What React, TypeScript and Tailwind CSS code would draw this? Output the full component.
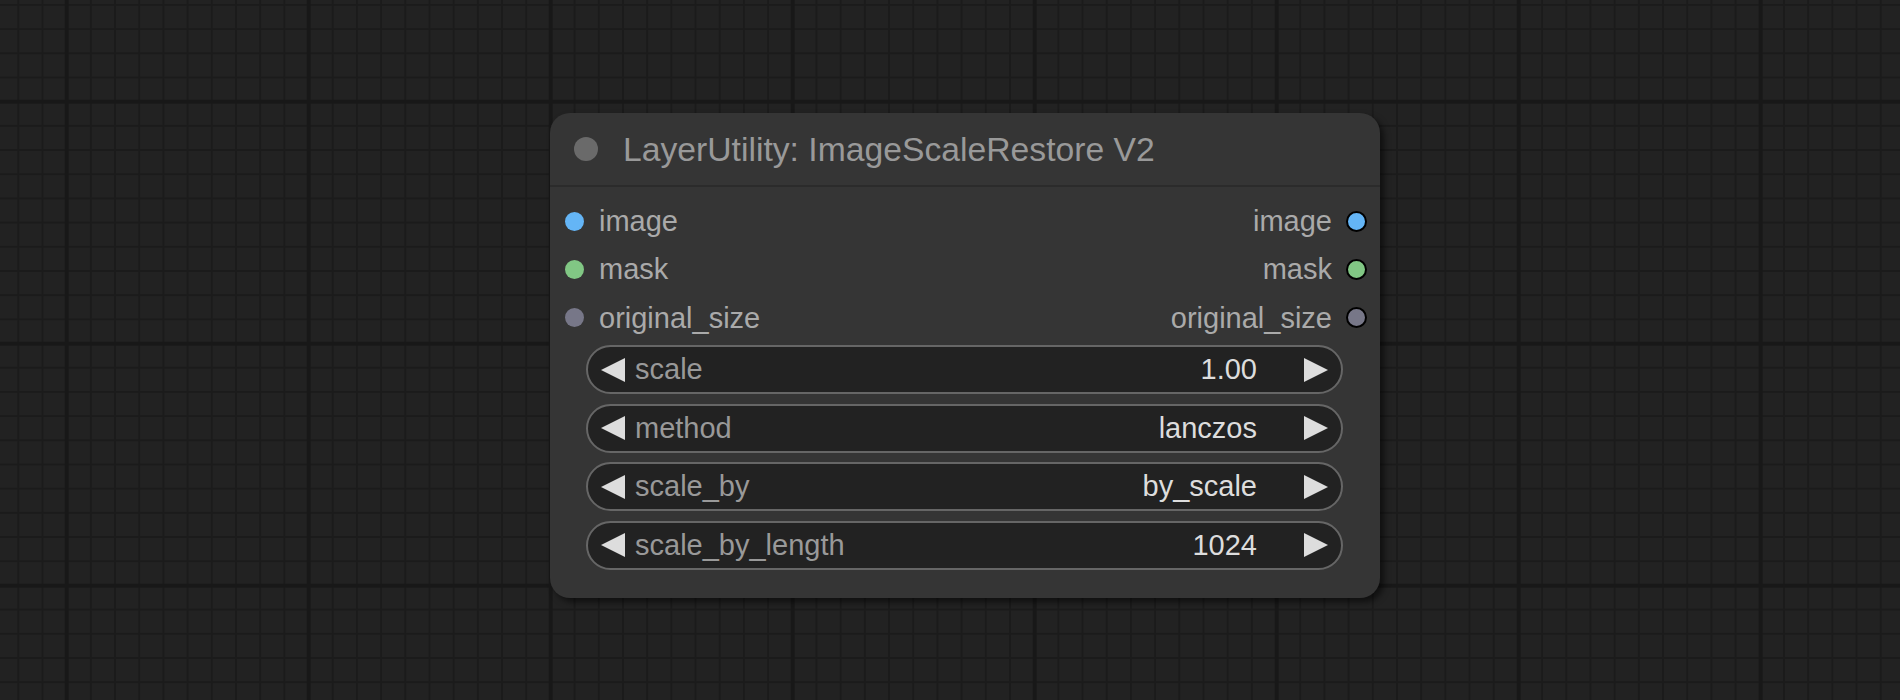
const inputs = [
  { name: "image", color: "bg-[#64b5f6]" },
  { name: "mask", color: "bg-[#81c784]" },
  { name: "original_size", color: "bg-[#777788]" },
];

const widgets = [
  { label: "scale", value: "1.00" },
  { label: "method", value: "lanczos" },
  { label: "scale_by", value: "by_scale" },
  { label: "scale_by_length", value: "1024" },
];

function Arrow({ dir }: { dir: "left" | "right" }) {
  return (
    <svg width="24" height="24" viewBox="0 0 24 24" className="shrink-0">
      <polygon
        points={dir === "left" ? "24,0 0,12 24,24" : "0,0 24,12 0,24"}
        fill="#dddddd"
      />
    </svg>
  );
}

function Widget({ label, value }: { label: string; value: string }) {
  return (
    <div className="flex h-[49px] items-center rounded-full border-2 border-[#666666] bg-[#222222] pl-[13px] pr-[13px] text-[29px] leading-[45px]">
      <Arrow dir="left" />
      <span className="ml-[10px] text-[#999999]">{label}</span>
      <span className="ml-auto mr-[47px] text-[#dddddd]">{value}</span>
      <Arrow dir="right" />
    </div>
  );
}

export default function App() {
  return (
    <div className="relative h-[700px] w-[1900px] overflow-hidden bg-[#222222] bg-[image:linear-gradient(to_right,#181818_0_4px,transparent_4px),linear-gradient(to_bottom,#181818_0_4px,transparent_4px),linear-gradient(to_right,#1b1b1b_0_2px,transparent_2px),linear-gradient(to_bottom,#1b1b1b_0_2px,transparent_2px)] bg-[size:242px_242px,242px_242px,24.2px_24.2px,24.2px_24.2px] bg-[position:64.7px_99.7px,64.7px_99.7px,65.7px_100.7px,65.7px_100.7px] font-['Liberation_Sans',Arial,sans-serif]">
      {/* Node */}
      <div className="absolute left-[550px] top-[113px] w-[830px] rounded-[20px] bg-[#353535] pb-[28px] shadow-[4px_4px_6px_rgba(0,0,0,0.55)]">
        {/* Title */}
        <div className="flex h-[74px] items-center border-b-2 border-[#2b2b2b] pl-[24px]">
          <div className="h-[24px] w-[24px] rounded-full bg-[#6a6a6a]" />
          <span className="ml-[25px] text-[33.7px] leading-[72px] text-[#999999]">
            LayerUtility: ImageScaleRestore V2
          </span>
        </div>

        {/* Slots */}
        <div className="flex flex-col pt-[10px]">
          {inputs.map((s) => (
            <div key={s.name} className="flex h-[48.4px] items-center justify-between text-[29px] leading-[48.4px] text-[#aaaaaa]">
              <div className="flex items-center pl-[15px]">
                <div className={`h-[19px] w-[19px] rounded-full ${s.color}`} />
                <span className="ml-[15px]">{s.name}</span>
              </div>
              <div className="flex items-center pr-[13px]">
                <span className="mr-[14px]">{s.name}</span>
                <div className={`h-[21px] w-[21px] rounded-full border-2 border-black ${s.color}`} />
              </div>
            </div>
          ))}
        </div>

        {/* Widgets */}
        <div className="mt-[3px] flex flex-col gap-[9.5px] pl-[36px] pr-[37px]">
          {widgets.map((w) => (
            <Widget key={w.label} label={w.label} value={w.value} />
          ))}
        </div>
      </div>
    </div>
  );
}
